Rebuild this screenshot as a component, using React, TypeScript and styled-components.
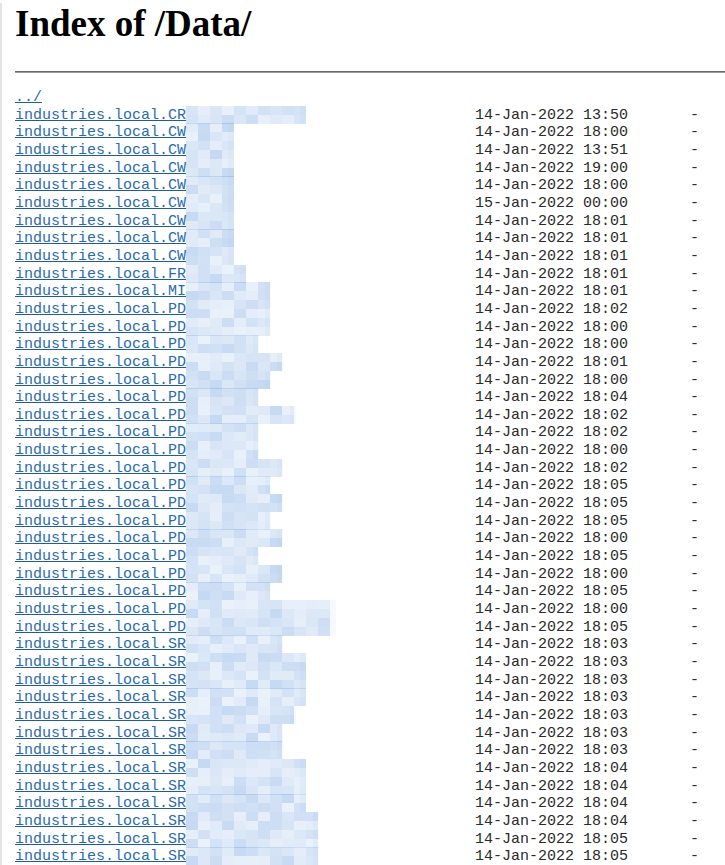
import React from 'react';
import styled, { createGlobalStyle } from 'styled-components';

const GlobalStyle = createGlobalStyle`
  html, body {
    margin: 0;
    padding: 0;
    background: #ffffff;
  }
`;

type Entry = {
  name: string;
  reach: number;
  date: string;
};

const raw: [string, number, string][] = [
  ['CR', 300, '14-Jan-2022 13:50'],
  ['CW', 228, '14-Jan-2022 18:00'],
  ['CW', 228, '14-Jan-2022 13:51'],
  ['CW', 228, '14-Jan-2022 19:00'],
  ['CW', 228, '14-Jan-2022 18:00'],
  ['CW', 228, '15-Jan-2022 00:00'],
  ['CW', 228, '14-Jan-2022 18:01'],
  ['CW', 228, '14-Jan-2022 18:01'],
  ['CW', 228, '14-Jan-2022 18:01'],
  ['FR', 240, '14-Jan-2022 18:01'],
  ['MI', 265, '14-Jan-2022 18:01'],
  ['PD', 265, '14-Jan-2022 18:02'],
  ['PD', 265, '14-Jan-2022 18:00'],
  ['PD', 253, '14-Jan-2022 18:00'],
  ['PD', 277, '14-Jan-2022 18:01'],
  ['PD', 265, '14-Jan-2022 18:00'],
  ['PD', 253, '14-Jan-2022 18:04'],
  ['PD', 290, '14-Jan-2022 18:02'],
  ['PD', 253, '14-Jan-2022 18:02'],
  ['PD', 253, '14-Jan-2022 18:00'],
  ['PD', 277, '14-Jan-2022 18:02'],
  ['PD', 265, '14-Jan-2022 18:05'],
  ['PD', 277, '14-Jan-2022 18:05'],
  ['PD', 265, '14-Jan-2022 18:05'],
  ['PD', 277, '14-Jan-2022 18:00'],
  ['PD', 253, '14-Jan-2022 18:05'],
  ['PD', 277, '14-Jan-2022 18:00'],
  ['PD', 265, '14-Jan-2022 18:05'],
  ['PD', 330, '14-Jan-2022 18:00'],
  ['PD', 330, '14-Jan-2022 18:05'],
  ['SR', 277, '14-Jan-2022 18:03'],
  ['SR', 300, '14-Jan-2022 18:03'],
  ['SR', 300, '14-Jan-2022 18:03'],
  ['SR', 300, '14-Jan-2022 18:03'],
  ['SR', 290, '14-Jan-2022 18:03'],
  ['SR', 277, '14-Jan-2022 18:03'],
  ['SR', 277, '14-Jan-2022 18:03'],
  ['SR', 300, '14-Jan-2022 18:04'],
  ['SR', 300, '14-Jan-2022 18:04'],
  ['SR', 300, '14-Jan-2022 18:04'],
  ['SR', 313, '14-Jan-2022 18:04'],
  ['SR', 313, '14-Jan-2022 18:05'],
  ['SR', 313, '14-Jan-2022 18:05'],
];

const entries: Entry[] = raw.map(([code, reach, date]) => ({
  name: 'industries.local.' + code,
  reach,
  date,
}));

// small seeded generator so the mosaic looks the same on every render
let seed = 7;
const rand = () => {
  seed = (seed * 9301 + 49297) % 233280;
  return seed / 233280;
};

const MOSAIC_LEFT = 186;
const CELL = 12;

const mosaics = entries.map((e) => {
  const width = e.reach - MOSAIC_LEFT;
  const cols = Math.ceil(width / CELL);
  const cells: { x: number; y: number; a: number }[] = [];
  for (let c = 0; c < cols; c++) {
    for (let r = 0; r < 2; r++) {
      cells.push({ x: c * CELL, y: r * 9, a: 0.16 + rand() * 0.26 });
    }
  }
  return { width, cells };
});

const Page = styled.div`
  border-left: 2px solid #e4e4e4;
  padding: 0 0 0 13px;
  min-height: 865px;
  box-sizing: border-box;
`;

const Title = styled.h1`
  margin: 3px 0 0;
  font-family: 'Liberation Serif', 'Times New Roman', serif;
  font-weight: 700;
  font-size: 37px;
  line-height: 42px;
  color: #000;
`;

const Rule = styled.hr`
  margin: 26px 0 16px;
  height: 0;
  border: none;
  border-top: 1px solid #6a6a6a;
  border-bottom: 1px solid #9a9a9a;
`;

const Listing = styled.pre`
  margin: 0;
  font-family: 'Liberation Mono', 'Courier New', monospace;
  font-size: 15px;
  line-height: 17.67px;
  color: #2a2a2a;
`;

const Row = styled.div`
  display: grid;
  grid-template-columns: 460px 153px 71px;
  height: 17.67px;
  white-space: pre;
`;

const NameCell = styled.span`
  display: flex;
  align-items: flex-start;
`;

const Link = styled.a`
  color: #2a6bb0;
  text-decoration: underline;
  text-decoration-color: #1f5c9e;
`;

const Size = styled.span`
  text-align: right;
`;

const Pixelated = ({ width, cells }: { width: number; cells: { x: number; y: number; a: number }[] }) => (
  <svg width={width + 6} height={18} style={{ display: 'block', marginTop: '-1px' }}>
    {cells.map((c, i) => (
      <rect key={i} x={c.x} y={c.y} width={CELL} height={9} fill={`rgba(120,165,225,${c.a.toFixed(2)})`} />
    ))}
    <rect x={width} y={0} width={6} height={18} fill="rgba(120,165,225,0.06)" />
  </svg>
);

export default function App() {
  return (
    <>
      <GlobalStyle />
      <Page>
        <Title>Index of /Data/</Title>
        <Rule />
        <Listing>
          <Row>
            <NameCell>
              <Link href="#">../</Link>
            </NameCell>
          </Row>
          {entries.map((e, i) => (
            <Row key={i}>
              <NameCell>
                <Link href="#">{e.name}</Link>
                <Pixelated width={mosaics[i].width} cells={mosaics[i].cells} />
              </NameCell>
              <span>{e.date}</span>
              <Size>-</Size>
            </Row>
          ))}
        </Listing>
      </Page>
    </>
  );
}
